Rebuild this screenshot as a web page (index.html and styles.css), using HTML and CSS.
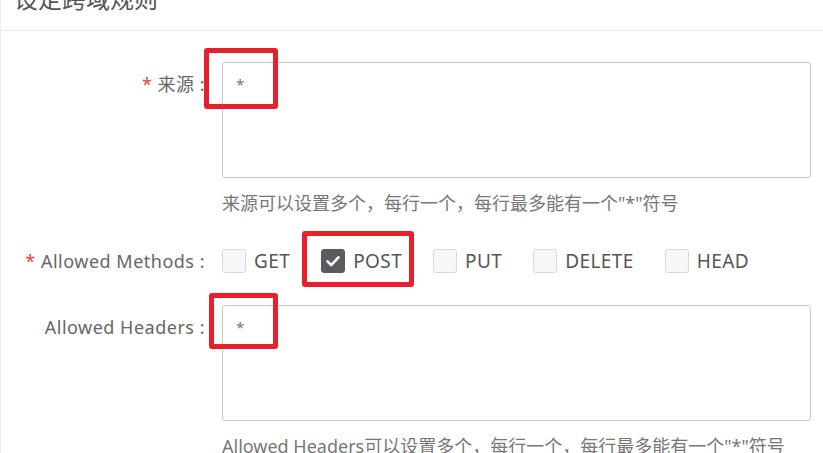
FILE: index.html
```html
<!DOCTYPE html>
<html lang="zh-CN">
<head>
  <meta charset="UTF-8">
  <title>设定跨域规则</title>
  <link rel="stylesheet" href="styles.css">
</head>
<body>
  <div class="panel">
    <div class="panel-header">
      <h2 class="panel-title">设定跨域规则</h2>
    </div>

    <form class="rule-form">
      <div class="form-row">
        <label class="form-label"><span class="required">*</span> 来源 :</label>
        <div class="form-control">
          <div class="field-wrap">
            <textarea class="text-area">*</textarea>
            <span class="mark mark-origin"></span>
          </div>
          <p class="help">来源可以设置多个，每行一个，每行最多能有一个"*"符号</p>
        </div>
      </div>

      <div class="form-row row-methods">
        <label class="form-label"><span class="required">*</span> Allowed Methods :</label>
        <div class="form-control">
          <div class="check-group">
            <label class="check"><span class="box"></span>GET</label>
            <label class="check is-checked">
              <span class="box">
                <svg viewBox="0 0 24 24" width="24" height="24"><path d="M6 12.5l4 4 8-8.5" fill="none" stroke="#fff" stroke-width="2.8" stroke-linecap="round" stroke-linejoin="round"/></svg>
              </span>POST
              <span class="mark mark-post"></span>
            </label>
            <label class="check"><span class="box"></span>PUT</label>
            <label class="check"><span class="box"></span>DELETE</label>
            <label class="check"><span class="box"></span>HEAD</label>
          </div>
        </div>
      </div>

      <div class="form-row">
        <label class="form-label">Allowed Headers :</label>
        <div class="form-control">
          <div class="field-wrap">
            <textarea class="text-area">*</textarea>
            <span class="mark mark-headers"></span>
          </div>
          <p class="help">Allowed Headers可以设置多个，每行一个，每行最多能有一个"*"符号</p>
        </div>
      </div>
    </form>
  </div>
</body>
</html>
```

FILE: styles.css
```css
:root {
  --label-color: #666;
  --help-color: #777;
  --border-color: #c9c9c9;
  --mark-color: #e8202c;
  --required-color: #f04134;
}

html, body {
  margin: 0;
  padding: 0;
  background: #fff;
  overflow: hidden;
}

body {
  font-family: "Noto Sans", "Noto Sans CJK SC", sans-serif;
  color: var(--label-color);
  font-size: 18px;
}

.panel {
  border-left: 1px solid #eee;
  min-height: 100vh;
}

.panel-header {
  height: 44px;
  margin-top: -13px;
  padding-left: 13px;
  border-bottom: 1px solid #e9e9e9;
  box-sizing: border-box;
}

.panel-title {
  margin: 0;
  font-size: 24px;
  line-height: 24px;
  font-weight: normal;
  color: #555;
}

.rule-form {
  padding: 31px 12px 0 0;
}

.form-row {
  display: flex;
  gap: 17px;
}

.row-methods {
  margin: 34px 0 32px;
}

.form-label {
  width: 204px;
  flex-shrink: 0;
  text-align: right;
  line-height: 24px;
  padding-top: 10px;
  letter-spacing: 0.5px;
}

.row-methods .form-label {
  padding-top: 0;
}

.required {
  color: var(--required-color);
}

.form-control {
  flex: 1;
}

.field-wrap {
  position: relative;
}

.text-area {
  display: block;
  width: 100%;
  height: 116px;
  box-sizing: border-box;
  margin: 0;
  padding: 9px 13px;
  border: 1px solid var(--border-color);
  border-radius: 3px;
  font-family: "Noto Sans", "Noto Sans CJK SC", sans-serif;
  font-size: 15px;
  line-height: 24px;
  color: #777;
  resize: none;
  outline: none;
}

.help {
  margin: 13px 0 0;
  line-height: 24px;
  color: var(--help-color);
}

.check-group {
  display: flex;
  align-items: center;
  gap: 31px;
}

.check {
  position: relative;
  display: flex;
  align-items: center;
  gap: 8px;
  line-height: 24px;
  font-size: 19px;
  letter-spacing: 0.4px;
  color: #555;
}

.box {
  width: 22px;
  height: 22px;
  border: 1px solid #d9d9d9;
  border-radius: 3px;
  background: #f7f7f7;
  display: flex;
  align-items: center;
  justify-content: center;
}

.box svg {
  display: block;
}

.is-checked .box {
  background: #5a5a5f;
  border-color: #5a5a5f;
}

/* red annotation frames */
.mark {
  position: absolute;
  border: 5px solid var(--mark-color);
  border-radius: 3px;
  pointer-events: none;
}

.mark-origin {
  left: -18px;
  top: -14px;
  width: 64px;
  height: 51px;
}

.mark-headers {
  left: -13px;
  top: -12px;
  width: 59px;
  height: 46px;
}

.mark-post {
  left: -19px;
  top: -18px;
  width: 102px;
  height: 46px;
}
```
